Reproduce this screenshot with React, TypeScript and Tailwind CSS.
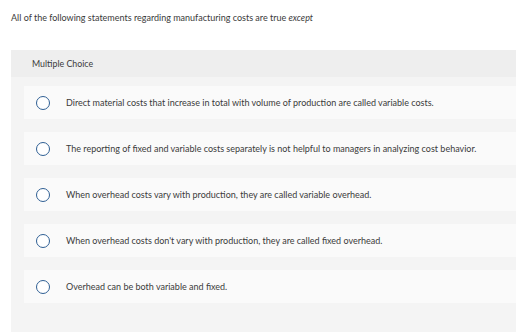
import React from "react";

const options = [
  "Direct material costs that increase in total with volume of production are called variable costs.",
  "The reporting of fixed and variable costs separately is not helpful to managers in analyzing cost behavior.",
  "When overhead costs vary with production, they are called variable overhead.",
  "When overhead costs don't vary with production, they are called fixed overhead.",
  "Overhead can be both variable and fixed.",
];

export default function App() {
  return (
    <div
      className="w-[516px] h-[332px] overflow-hidden bg-white text-[#3a3a3a]"
      style={{ fontFamily: "Lato, 'Liberation Sans', Arial, sans-serif" }}
    >
      <div className="h-[50px] pl-[11px] pt-[12px] text-[9px] leading-[11px]">
        All of the following statements regarding manufacturing costs are true <i>except</i>
      </div>
      <div className="ml-[11px] bg-[#f4f4f4] h-[282px]">
        <div className="h-[27px] bg-[#eeeeee] pl-[21px] flex items-center text-[8.8px]">
          Multiple Choice
        </div>
        <div className="pl-[13px] pt-[9px] flex flex-col gap-[13px]">
          {options.map((o) => (
            <div key={o} className="h-[33px] bg-[#fafafa] flex items-center pl-[12px]">
              <span className="w-[14px] h-[14px] rounded-full border-[1.5px] border-[#2f5f94] bg-white shrink-0" />
              <span className="ml-[16px] text-[9px]">{o}</span>
            </div>
          ))}
        </div>
      </div>
    </div>
  );
}
